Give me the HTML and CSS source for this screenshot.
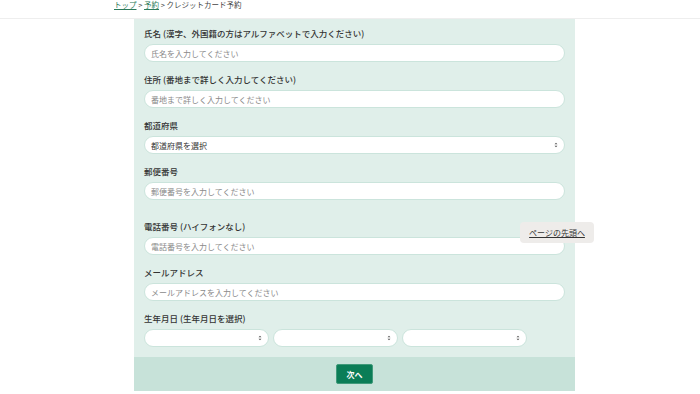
FILE: index.html
```
<!DOCTYPE html>
<html lang="ja">

<head>
  <meta charset="UTF-8" />
  <meta name="viewport" content="width=device-width, initial-scale=1.0" />
  <title>クレジットカード予約</title>
  <link rel="stylesheet" href="styles.css">
</head>

<body>
  <div class="breadcrumb">
    <div class="breadcrumb-inner">
      <a href="#">トップ</a> &gt; <a href="#">予約</a> &gt; クレジットカード予約
    </div>
  </div>

  <div class="reserve-container">
    <form id="reserveForm">
      <div class="form-fields">
        <div class="field">
          <label for="name">氏名 (漢字、外国籍の方はアルファベットで入力ください)</label>
          <input type="text" id="name" name="name" placeholder="氏名を入力してください" />
        </div>

        <div class="field">
          <label for="address">住所 (番地まで詳しく入力してください)</label>
          <input type="text" id="address" name="address" placeholder="番地まで詳しく入力してください" />
        </div>

        <div class="field">
          <label for="pref">都道府県</label>
          <div class="select-wrap">
            <select id="pref" name="pref">
              <option>都道府県を選択</option>
            </select>
            <svg class="select-arrow" viewBox="0 0 6 8"><path d="M3 0.5 L5.2 3 H0.8 Z M3 7.5 L5.2 5 H0.8 Z" fill="#555"/></svg>
          </div>
        </div>

        <div class="field field-gap">
          <label for="zip">郵便番号</label>
          <input type="text" id="zip" name="zip" placeholder="郵便番号を入力してください" />
        </div>

        <div class="field">
          <label for="tel">電話番号 (ハイフォンなし)</label>
          <input type="text" id="tel" name="tel" placeholder="電話番号を入力してください" />
        </div>

        <div class="field">
          <label for="email">メールアドレス</label>
          <input type="text" id="email" name="email" placeholder="メールアドレスを入力してください" />
        </div>

        <div class="field">
          <label>生年月日 (生年月日を選択)</label>
          <div class="birth-row">
            <div class="select-wrap">
              <select name="year"><option></option></select>
              <svg class="select-arrow" viewBox="0 0 6 8"><path d="M3 0.5 L5.2 3 H0.8 Z M3 7.5 L5.2 5 H0.8 Z" fill="#555"/></svg>
            </div>
            <div class="select-wrap">
              <select name="month"><option></option></select>
              <svg class="select-arrow" viewBox="0 0 6 8"><path d="M3 0.5 L5.2 3 H0.8 Z M3 7.5 L5.2 5 H0.8 Z" fill="#555"/></svg>
            </div>
            <div class="select-wrap">
              <select name="day"><option></option></select>
              <svg class="select-arrow" viewBox="0 0 6 8"><path d="M3 0.5 L5.2 3 H0.8 Z M3 7.5 L5.2 5 H0.8 Z" fill="#555"/></svg>
            </div>
          </div>
        </div>
      </div>

      <div class="form-footer">
        <button type="submit">次へ</button>
      </div>
    </form>
  </div>

  <a href="#" class="page-top">ページの先頭へ</a>
</body>

</html>
```

FILE: styles.css
```
:root {
  --bg-color: #fff;
  --form-bg: #e0efea;
  --footer-bg: #c7e2d9;
  --border-color: #cbe4dc;
  --text-color: #333;
  --link-color: #2c7a5a;
  --button-color: #0b7d57;
}

* {
  box-sizing: border-box;
}

html,
body {
  margin: 0;
  padding: 0;
  background-color: var(--bg-color);
  font-family: "Noto Sans CJK JP", "Noto Sans", sans-serif;
  color: var(--text-color);
}

.breadcrumb {
  height: 19px;
  border-bottom: 1px solid #eeeeee;
}

.breadcrumb-inner {
  margin-left: 114px;
  font-size: 7.5px;
  line-height: 10px;
  color: #444;
}

.breadcrumb a {
  color: var(--link-color);
  text-decoration: underline;
}

.reserve-container {
  width: 441px;
  margin-left: 134px;
  background: var(--form-bg);
}

.form-fields {
  padding: 8px 10px 10px;
}

.field {
  display: flex;
  flex-direction: column;
  gap: 5px;
  margin-bottom: 11px;
}

.field:last-child {
  margin-bottom: 0;
}

.field-gap {
  margin-bottom: 20px;
}

label {
  font-size: 8.5px;
  line-height: 12px;
  font-weight: 500;
  color: #333;
}

input[type="text"],
select {
  display: block;
  width: 100%;
  height: 18px;
  margin: 0;
  padding: 0 6px;
  border: 1px solid var(--border-color);
  border-radius: 9px;
  background: #fff;
  font-family: inherit;
  font-size: 8px;
  color: #333;
  outline: none;
}

input::placeholder {
  color: #8a8a8a;
}

select {
  appearance: none;
  -webkit-appearance: none;
}

.select-wrap {
  position: relative;
  height: 18px;
}

.select-arrow {
  position: absolute;
  right: 7px;
  top: 6px;
  width: 4px;
  height: 6px;
}

.birth-row {
  display: flex;
  gap: 4px;
}

.birth-row .select-wrap {
  width: 125px;
}

.form-footer {
  height: 34px;
  background: var(--footer-bg);
  display: flex;
  justify-content: center;
  align-items: center;
}

button {
  width: 37px;
  height: 20px;
  padding: 0;
  background-color: var(--button-color);
  color: #fff;
  border: 1px solid #3f9a7a;
  border-radius: 2px;
  font-family: inherit;
  font-size: 8px;
  font-weight: bold;
  cursor: pointer;
}

.page-top {
  position: fixed;
  left: 520px;
  top: 222px;
  width: 74px;
  height: 21px;
  display: flex;
  align-items: center;
  justify-content: center;
  background: #eeecea;
  border-radius: 4px;
  font-size: 8px;
  color: #333;
  text-decoration: underline;
}
```
